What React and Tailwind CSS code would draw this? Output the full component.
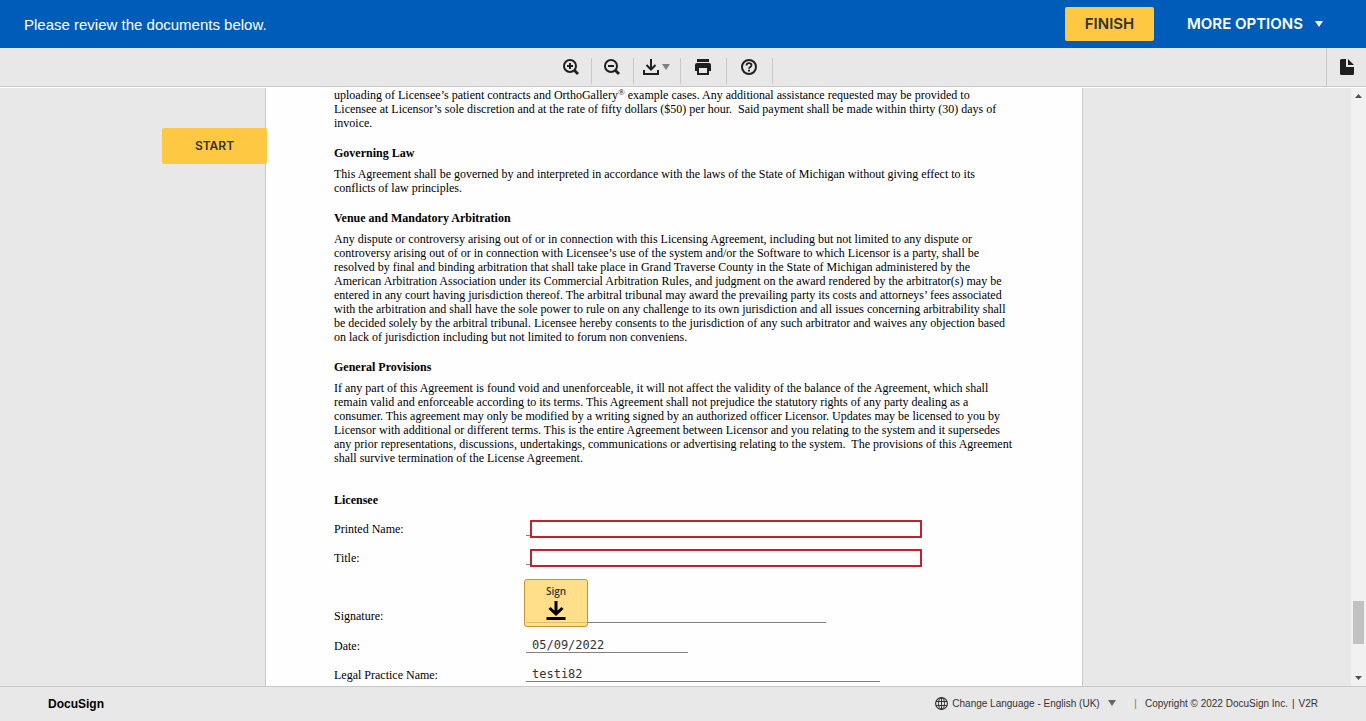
import React from 'react';

const icon = 'block shrink-0 text-[#1f1f1f]';

function ZoomIcon({ plus }) {
  return (
    <svg className={icon} width="16" height="16" viewBox="0 0 16 16" fill="none" stroke="currentColor" aria-hidden="true">
      <circle cx="7" cy="7" r="6" strokeWidth="2" />
      <path d="M11.300 11.300 15 15" strokeWidth="2.800" />
      <path d="M4 7h6" strokeWidth="2" />
      {plus && <path d="M7 4v6" strokeWidth="2" />}
    </svg>
  );
}

function DownloadIcon() {
  return (
    <svg className={icon} width="16" height="16" viewBox="0 0 16 16" fill="none" stroke="currentColor" strokeWidth="2" aria-hidden="true">
      <path d="M8 0v10.500M3.500 6 8 10.500 12.500 6M1 11v4h14v-4" />
    </svg>
  );
}

function PrintIcon() {
  return (
    <svg className={icon} width="16" height="16" viewBox="0 0 16 16" aria-hidden="true">
      <path fill="currentColor" fillRule="evenodd" d="M2 0h12v3H2zM2 4h12a2 2 0 0 1 2 2v6h-2v4H2v-4H0V6a2 2 0 0 1 2-2zM4 9v5h8V9z" />
    </svg>
  );
}

function HelpIcon() {
  return (
    <svg className={icon} width="16" height="16" viewBox="0 0 16 16" fill="none" stroke="currentColor" strokeWidth="2" aria-hidden="true">
      <circle cx="8" cy="8" r="7" />
      <path d="M5.500 6.500C5.500 5 6.500 4.200 8 4.200s2.500.8 2.500 2.100C10.500 8 8 7.900 8 9.800" strokeWidth="1.800" />
      <path d="M8 10.800v1.800" />
    </svg>
  );
}

function DocIcon() {
  return (
    <svg className={icon} width="14" height="16" viewBox="0 0 14 16" fill="currentColor" aria-hidden="true">
      <path d="M1.500 0H6v8h8v6.500a1.500 1.500 0 0 1-1.500 1.500h-11A1.500 1.500 0 0 1 0 14.500v-13A1.500 1.500 0 0 1 1.500 0z" />
      <path d="M8 0 14 6H8z" />
    </svg>
  );
}

function GlobeIcon() {
  return (
    <svg className="block shrink-0 text-[#333]" width="13" height="13" viewBox="0 0 13 13" fill="none" stroke="currentColor" aria-hidden="true">
      <circle cx="6.500" cy="6.500" r="5.900" strokeWidth="1.200" />
      <ellipse cx="6.500" cy="6.500" rx="3" ry="5.900" />
      <path d="M6.500.5v12M1 4.500h11M1 8.500h11" />
    </svg>
  );
}

function Caret({ className }) {
  return (
    <svg className={className} width="8" height="6" viewBox="0 0 8 6" fill="currentColor" aria-hidden="true">
      <path d="M0 0h8L4 6z" />
    </svg>
  );
}

function ScrollArrow({ up }) {
  return (
    <svg className="block text-[#505050]" width="7" height="4" viewBox="0 0 7 4" fill="currentColor" aria-hidden="true">
      <path d={up ? 'M0 4 3.500 0 7 4z' : 'M0 0h7L3.500 4z'} />
    </svg>
  );
}

function Tool({ label, className, children }) {
  return (
    <button type="button" aria-label={label} className={`flex h-[26px] items-center justify-center gap-[3px] border-r border-[#c8c8c8] pb-2 ${className}`}>
      {children}
    </button>
  );
}

function Lines({ lines }) {
  return (
    <p className="whitespace-pre">
      {lines.map((line, i) => (
        <span key={i} className="block">{line}</span>
      ))}
    </p>
  );
}

function Section({ title, lines }) {
  return (
    <section className="mt-4">
      <h2 className="mb-[7px] font-bold">{title}</h2>
      <Lines lines={lines} />
    </section>
  );
}

function InputRow({ id, label }) {
  return (
    <div className="flex h-[29px] items-center">
      <label htmlFor={id} className="w-48">{label}</label>
      <span className="h-[14px] w-1 border-b border-[#808080]" />
      <input id={id} type="text" className="h-[18px] w-[392px] border-2 border-[#c71f32] bg-white px-1 font-['DejaVu_Sans_Mono',monospace] text-xs outline-none" />
    </div>
  );
}

function ValueRow({ label, value, width }) {
  return (
    <div className="flex h-[29px] items-center">
      <span className="w-48">{label}</span>
      <span className={`h-[14px] border-b border-[#808080] pl-1.5 font-['DejaVu_Sans_Mono',monospace] leading-3 text-[#333] ${width}`}>{value}</span>
    </div>
  );
}

const opening = [
  <>uploading of Licensee’s patient contracts and OrthoGallery<sup className="text-[9px] leading-none">®</sup> example cases. Any additional assistance requested may be provided to</>,
  'Licensee at Licensor’s sole discretion and at the rate of fifty dollars ($50) per hour.  Said payment shall be made within thirty (30) days of',
  'invoice.',
];

const sections = [
  {
    title: 'Governing Law',
    lines: [
      'This Agreement shall be governed by and interpreted in accordance with the laws of the State of Michigan without giving effect to its',
      'conflicts of law principles.',
    ],
  },
  {
    title: 'Venue and Mandatory Arbitration',
    lines: [
      'Any dispute or controversy arising out of or in connection with this Licensing Agreement, including but not limited to any dispute or',
      'controversy arising out of or in connection with Licensee’s use of the system and/or the Software to which Licensor is a party, shall be',
      'resolved by final and binding arbitration that shall take place in Grand Traverse County in the State of Michigan administered by the',
      'American Arbitration Association under its Commercial Arbitration Rules, and judgment on the award rendered by the arbitrator(s) may be',
      'entered in any court having jurisdiction thereof. The arbitral tribunal may award the prevailing party its costs and attorneys’ fees associated',
      'with the arbitration and shall have the sole power to rule on any challenge to its own jurisdiction and all issues concerning arbitrability shall',
      'be decided solely by the arbitral tribunal. Licensee hereby consents to the jurisdiction of any such arbitrator and waives any objection based',
      'on lack of jurisdiction including but not limited to forum non conveniens.',
    ],
  },
  {
    title: 'General Provisions',
    lines: [
      'If any part of this Agreement is found void and unenforceable, it will not affect the validity of the balance of the Agreement, which shall',
      'remain valid and enforceable according to its terms. This Agreement shall not prejudice the statutory rights of any party dealing as a',
      'consumer. This agreement may only be modified by a writing signed by an authorized officer Licensor. Updates may be licensed to you by',
      'Licensor with additional or different terms. This is the entire Agreement between Licensor and you relating to the system and it supersedes',
      'any prior representations, discussions, undertakings, communications or advertising relating to the system.  The provisions of this Agreement',
      'shall survive termination of the License Agreement.',
    ],
  },
];

export default function App() {
  return (
    <div className="flex h-screen flex-col overflow-hidden bg-[#e8e8e8] font-['Liberation_Sans',Arial,sans-serif]">
      <header className="flex h-12 shrink-0 items-center justify-between bg-[#005cb9] pl-6 pr-[43px]">
        <h1 className="pt-0.5 text-[15px] text-white">Please review the documents below.</h1>
        <div className="flex items-center gap-[33px] font-['Inter',sans-serif] text-[15px] font-semibold">
          <button type="button" className="h-[34px] w-[89px] rounded-xs bg-[#ffc843] text-[#333]">FINISH</button>
          <button type="button" className="flex w-[136px] items-center justify-between text-white">
            MORE OPTIONS
            <Caret />
          </button>
        </div>
      </header>

      <div className="flex h-10 shrink-0 border-b border-white">
        <div className="flex flex-1 items-end justify-center border-b border-[#c8c8c8]" role="toolbar" aria-label="Document tools">
          <div className="mb-0.5 flex pr-0.5">
            <Tool label="Zoom in" className="w-10"><ZoomIcon plus /></Tool>
            <Tool label="Zoom out" className="w-[42px]"><ZoomIcon /></Tool>
            <Tool label="Download" className="w-[47px]">
              <DownloadIcon />
              <Caret className="text-[#808080]" />
            </Tool>
            <Tool label="Print" className="w-[46px]"><PrintIcon /></Tool>
            <Tool label="Help" className="w-[46px]"><HelpIcon /></Tool>
          </div>
        </div>
        <button type="button" aria-label="Documents" className="flex w-10 items-center justify-center border-b border-l border-[#c8c8c8]">
          <DocIcon />
        </button>
      </div>

      <main className="flex min-h-0 flex-1">
        <div className="flex min-w-0 flex-1 overflow-hidden pr-[3px]">
          <div className="relative flex-1">
            <button type="button" className="absolute top-10 -right-0.5 z-10 h-9 w-[105px] rounded-xs bg-[#ffc843] font-['Inter',sans-serif] text-xs font-semibold text-[#333]">START</button>
          </div>
          <article className="w-[818px] shrink-0 border-x border-[#c8c8c8] bg-[#fefefe] pl-[68px] font-['Liberation_Serif','Times_New_Roman',serif] text-xs leading-[14px] text-black">
            <Lines lines={opening} />
            {sections.map((s) => (
              <Section key={s.title} title={s.title} lines={s.lines} />
            ))}
            <section className="mt-7">
              <h2 className="mb-[7px] font-bold">Licensee</h2>
              <InputRow id="printed-name" label="Printed Name:" />
              <InputRow id="title" label="Title:" />
              <div className="flex h-[59px] items-end pb-2">
                <span className="w-48">Signature:</span>
                <span className="relative h-[14px] w-[300px] border-b border-[#808080]">
                  <button type="button" className="absolute -bottom-[5px] -left-0.5 flex h-12 w-16 flex-col items-center justify-center gap-1 rounded-[3px] border border-[#c8922f] bg-[#ffd463]/75 pb-0.5 font-['Open_Sans',sans-serif] text-[10px] leading-3 font-semibold text-[#333]">
                    Sign
                    <svg className="block text-black" width="20" height="19" viewBox="0 0 20 19" fill="none" stroke="currentColor" aria-hidden="true">
                      <path d="M10 0v13M3.500 7l6.500 6 6.500-6" strokeWidth="3" />
                      <path d="M.500 17.500h19" strokeWidth="3" />
                    </svg>
                  </button>
                </span>
              </div>
              <ValueRow label="Date:" value="05/09/2022" width="w-[162px]" />
              <ValueRow label="Legal Practice Name:" value="testi82" width="w-[354px]" />
            </section>
          </article>
          <div className="flex-1" />
        </div>
        <div className="flex w-[15px] shrink-0 flex-col items-center bg-[#f1f1f1] py-[6px]" aria-hidden="true">
          <ScrollArrow up />
          <div className="flex w-[11px] flex-1 flex-col py-1">
            <div className="grow-[499]" />
            <div className="h-[43px] bg-[#c1c1c1]" />
            <div className="grow-[28]" />
          </div>
          <ScrollArrow />
        </div>
      </main>

      <footer className="flex h-[35px] shrink-0 items-center justify-between border-t border-[#c8c8c8] pr-12 pl-12 text-[10px] text-[#333]">
        <span className="text-xs font-bold text-black">DocuSign</span>
        <div className="flex items-center pb-0.5">
          <GlobeIcon />
          <label className="ml-1 flex items-center gap-2">
            <select aria-label="Change language" className="appearance-none bg-transparent outline-none">
              <option>Change Language - English (UK)</option>
            </select>
            <Caret className="text-[#666]" />
          </label>
          <span className="mr-2 ml-[18px] text-[#a86d20]">|</span>
          <span>Copyright © 2022 DocuSign Inc.</span>
          <span className="mx-1">|</span>
          <span>V2R</span>
        </div>
      </footer>
    </div>
  );
}
